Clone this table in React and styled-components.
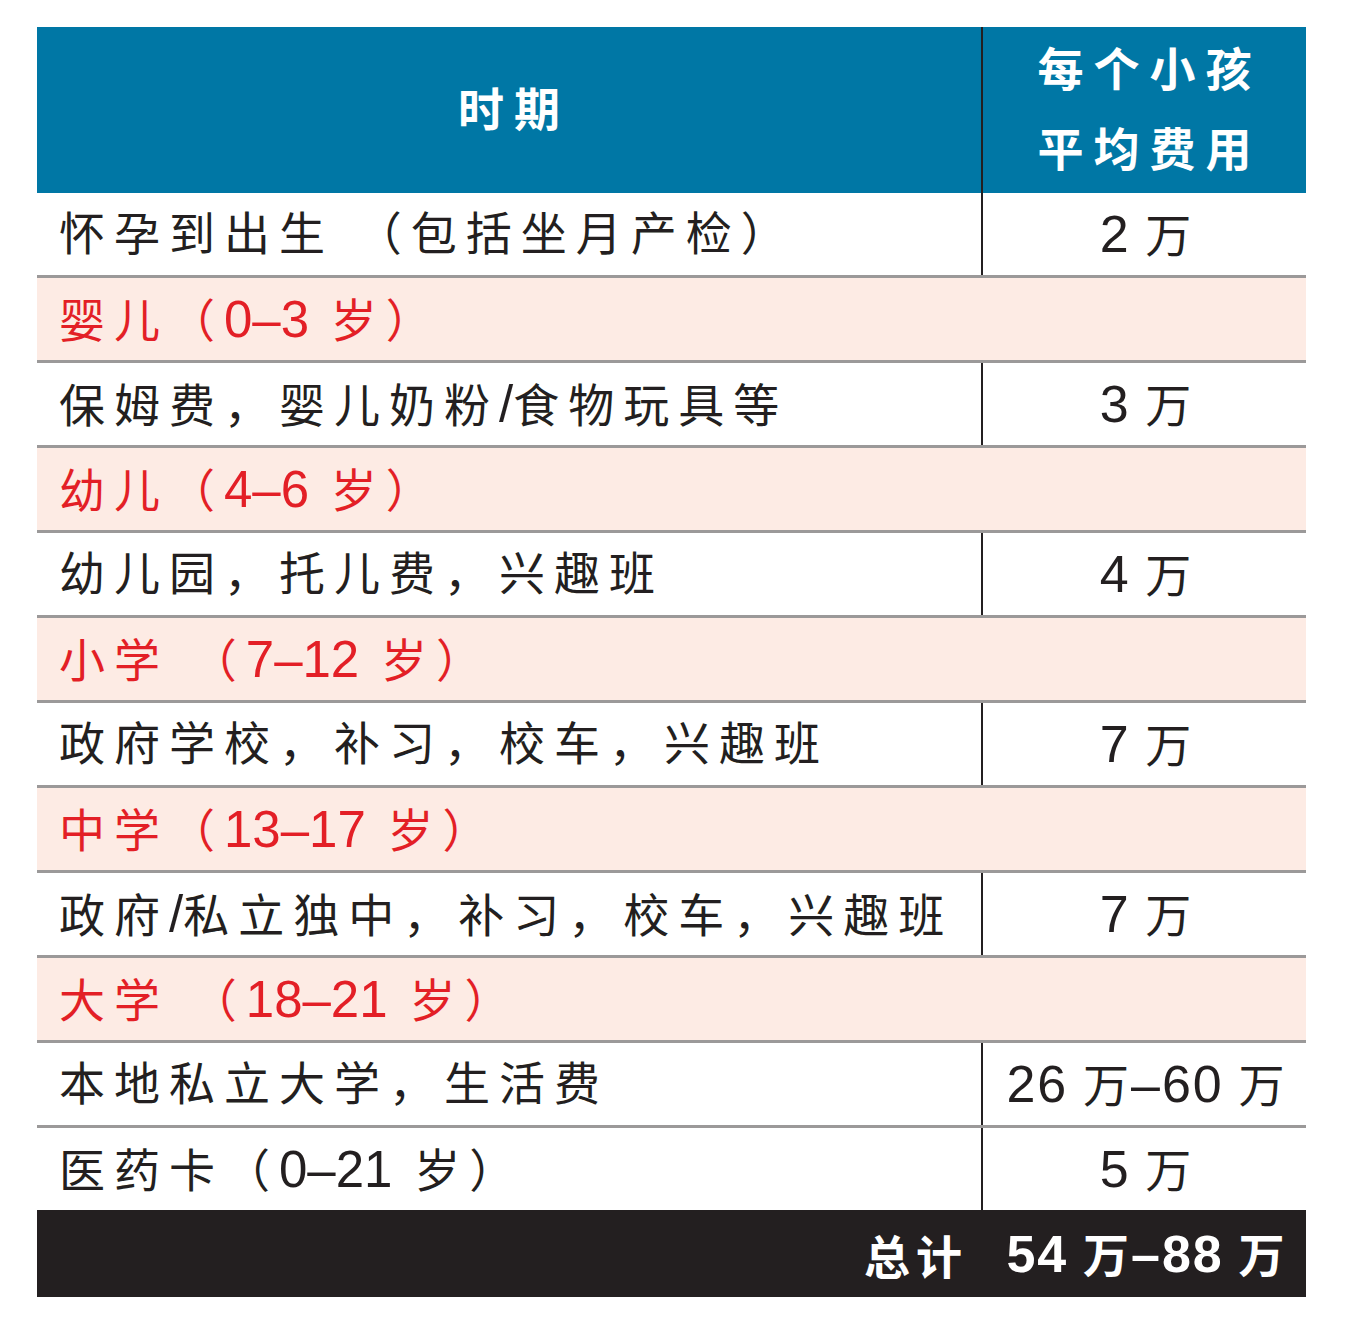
import React from "react";
import styled, { createGlobalStyle } from "styled-components";

const GlobalStyle = createGlobalStyle`
  body {
    margin: 0;
    background: #ffffff;
    font-family: "Liberation Sans", "Noto Sans CJK SC", sans-serif;
  }
`;

const rows = [
  { type: "item", label: "怀孕到出生 （包括坐月产检）", value: "2 万" },
  { type: "stage", label: "婴儿（0–3 岁）" },
  { type: "item", label: "保姆费，婴儿奶粉/食物玩具等", value: "3 万" },
  { type: "stage", label: "幼儿（4–6 岁）" },
  { type: "item", label: "幼儿园，托儿费，兴趣班", value: "4 万" },
  { type: "stage", label: "小学 （7–12 岁）" },
  { type: "item", label: "政府学校，补习，校车，兴趣班", value: "7 万" },
  { type: "stage", label: "中学（13–17 岁）" },
  { type: "item", label: "政府/私立独中，补习，校车，兴趣班", value: "7 万" },
  { type: "stage", label: "大学 （18–21 岁）" },
  { type: "item", label: "本地私立大学，生活费", value: "26 万–60 万" },
  { type: "item", label: "医药卡（0–21 岁）", value: "5 万", last: true },
];

const Page = styled.div`
  padding: 27px 0 0 37px;
`;

const Table = styled.div`
  width: 1269px;
  display: flex;
  flex-direction: column;
`;

const HeaderRow = styled.div`
  display: grid;
  grid-template-columns: 946px 1fr;
  height: 166px;
  background: #0077a5;
  color: #ffffff;
  font-weight: 700;
  font-size: 46px;
  letter-spacing: 10px;
`;

const HeaderCell = styled.div`
  display: flex;
  align-items: center;
  justify-content: center;
  text-align: center;
  line-height: 80px;
  padding-left: 10px;
  border-right: ${(p) => (p.$divider ? "2px solid #231f20" : "none")};
`;

const Row = styled.div`
  display: grid;
  grid-template-columns: ${(p) => (p.$full ? "1fr" : "946px 1fr")};
  height: ${(p) => (p.$last ? "82px" : "85px")};
  box-sizing: border-box;
  border-bottom: ${(p) => (p.$last ? "none" : "3px solid #9b9999")};
  background: ${(p) => (p.$full ? "#fdebe4" : "#ffffff")};
  color: ${(p) => (p.$full ? "#e31f26" : "#231f20")};
  font-size: 46px;
`;

const Text = styled.span`
  line-height: 1;
`;

const Num = styled.span`
  font-size: 51px;
  letter-spacing: 0;
`;

const LabelCell = styled.div`
  display: flex;
  align-items: center;
  padding-left: 22px;
  letter-spacing: 9px;
  white-space: pre;
  border-right: ${(p) => (p.$divider ? "2px solid #231f20" : "none")};
`;

const ValueCell = styled.div`
  display: flex;
  align-items: center;
  justify-content: center;
  white-space: pre;
  letter-spacing: 2px;
  padding-left: 4px;

  ${Num} {
    font-size: 52px;
    letter-spacing: 2px;
  }
`;

const TotalRow = styled.div`
  display: grid;
  grid-template-columns: 946px 1fr;
  height: 87px;
  background: #231f20;
  color: #ffffff;
  font-weight: 700;
  font-size: 46px;
`;

const TotalLabel = styled.div`
  display: flex;
  align-items: center;
  justify-content: flex-end;
  padding-right: 15px;
  letter-spacing: 6px;
`;

const TotalValue = styled(ValueCell)``;

// digits and dashes are set a little larger, in the Latin face
function Mixed({ text }) {
  return (
    <Text>
      {text.split(/([\d–/]+)/).map((part, i) =>
        /^[\d–/]+$/.test(part) ? <Num key={i}>{part}</Num> : part
      )}
    </Text>
  );
}

export default function App() {
  return (
    <>
      <GlobalStyle />
      <Page>
        <Table>
          <HeaderRow>
            <HeaderCell $divider>时期</HeaderCell>
            <HeaderCell>
              每个小孩
              <br />
              平均费用
            </HeaderCell>
          </HeaderRow>
          {rows.map((row, i) =>
            row.type === "stage" ? (
              <Row key={i} $full>
                <LabelCell>
                  <Mixed text={row.label} />
                </LabelCell>
              </Row>
            ) : (
              <Row key={i} $last={row.last}>
                <LabelCell $divider>
                  <Mixed text={row.label} />
                </LabelCell>
                <ValueCell>
                  <Mixed text={row.value} />
                </ValueCell>
              </Row>
            )
          )}
          <TotalRow>
            <TotalLabel>总计</TotalLabel>
            <TotalValue>
              <Mixed text="54 万–88 万" />
            </TotalValue>
          </TotalRow>
        </Table>
      </Page>
    </>
  );
}
